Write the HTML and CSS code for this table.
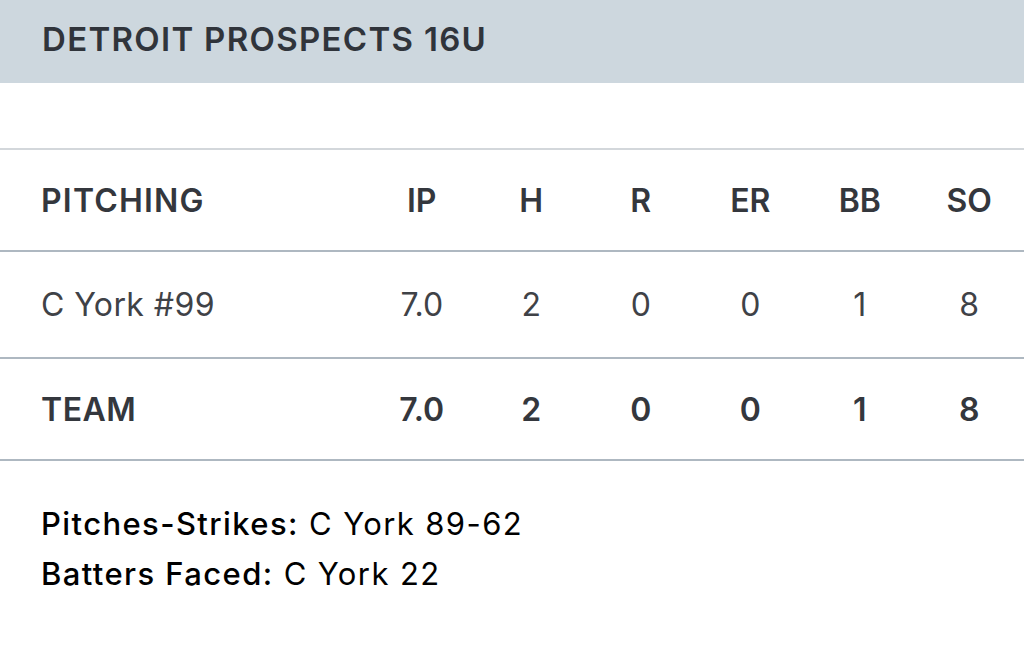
FILE: index.html
```html
<!DOCTYPE html>
<html lang="en">
<head>
<meta charset="utf-8">
<title>Detroit Prospects 16U – Pitching</title>
<link rel="stylesheet" href="styles.css">
</head>
<body>
<div class="team-bar"><h1 class="team-name">DETROIT PROSPECTS 16U</h1></div>
<div class="spacer"></div>
<div class="box">
  <div class="row head">
    <div class="name">PITCHING</div>
    <div class="stat">IP</div>
    <div class="stat">H</div>
    <div class="stat">R</div>
    <div class="stat">ER</div>
    <div class="stat">BB</div>
    <div class="stat">SO</div>
  </div>
  <div class="row player">
    <div class="name">C York #99</div>
    <div class="stat">7.0</div>
    <div class="stat">2</div>
    <div class="stat">0</div>
    <div class="stat">0</div>
    <div class="stat">1</div>
    <div class="stat">8</div>
  </div>
  <div class="row total">
    <div class="name">TEAM</div>
    <div class="stat">7.0</div>
    <div class="stat">2</div>
    <div class="stat">0</div>
    <div class="stat">0</div>
    <div class="stat">1</div>
    <div class="stat">8</div>
  </div>
</div>
<div class="notes">
  <p class="note"><span class="label">Pitches-Strikes:</span> C York 89-62</p>
  <p class="note"><span class="label">Batters Faced:</span> C York 22</p>
</div>
</body>
</html>
```
FILE: styles.css
```css
html, body {
  margin: 0;
  padding: 0;
  background: #ffffff;
}
body {
  font-family: Inter, "Noto Sans", "Liberation Sans", sans-serif;
  color: #3a3d43;
  width: 1024px;
  overflow: hidden;
}
.team-bar {
  height: 83px;
  background: #cdd7de;
  display: flex;
  align-items: center;
  padding-left: 42px;
  box-sizing: border-box;
}
.team-name {
  margin: 0;
  font-size: 33px;
  font-weight: 600;
  letter-spacing: 1.3px;
  color: #30343b;
  line-height: 1;
  padding-bottom: 4px;
}
.spacer {
  height: 65px;
}
.box {
  border-top: 2px solid #d3d7db;
}
.row {
  display: grid;
  grid-template-columns: 1fr repeat(6, 109.5px);
  align-items: center;
  border-bottom: 2px solid #aeb8c1;
  font-size: 32px;
}
.row .name {
  padding-left: 41px;
}
.row .stat {
  text-align: center;
}
.head {
  height: 100px;
  font-weight: 600;
  color: #34373d;
}
.head .name {
  letter-spacing: 1.2px;
}
.player {
  height: 105px;
  font-weight: 400;
  color: #3f4247;
}
.player .name {
  letter-spacing: 0.4px;
}
.total {
  height: 100px;
  font-weight: 600;
  color: #34373d;
}
.total .name {
  letter-spacing: 0.5px;
}
.notes {
  padding: 38px 0 0 41px;
}
.note {
  margin: 0;
  font-size: 31px;
  line-height: 50px;
  letter-spacing: 1.4px;
  color: #000000;
}
.label {
  font-weight: 500;
}
```
